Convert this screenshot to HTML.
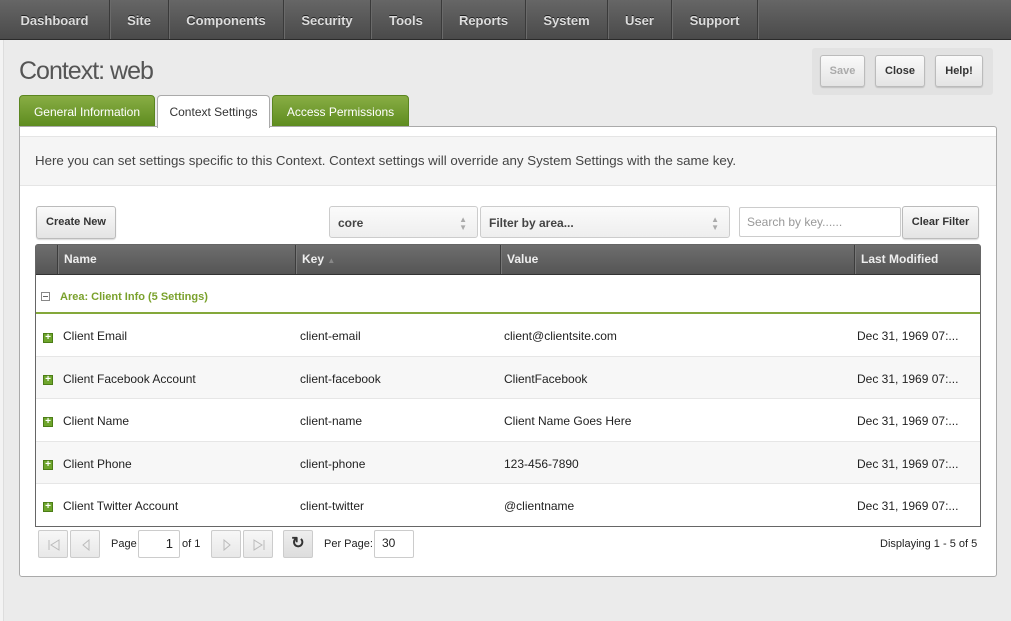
<!DOCTYPE html>
<html><head><style>
*{box-sizing:border-box;margin:0;padding:0}
body{width:1011px;height:621px;overflow:hidden;background:#ebebeb;font-family:"Liberation Sans",sans-serif;position:relative;color:#222}
.a{position:absolute}
#strip{left:0;top:40px;width:4px;height:581px;background:#f3f3f3;border-right:1px solid #ddd}
#nav{left:0;top:0;width:1011px;height:40px;background:linear-gradient(#666,#4a4a4a);border-bottom:1px solid #2a2a2a}
.ni{position:absolute;top:0;height:39px;line-height:41px;text-align:center;color:#ddd;font-weight:bold;font-size:13px;border-right:1px solid #3a3a3a;box-shadow:1px 0 0 #6a6a6a;text-shadow:0 -1px 0 #222}
h1{position:absolute;left:19px;top:57px;font-size:25px;font-weight:normal;color:#555;letter-spacing:-1px}
#btnbox{left:812px;top:48px;width:181px;height:47px;background:#e2e2e2;border-radius:3px}
.btn{position:absolute;background:linear-gradient(#fafafa,#e4e4e4);border:1px solid #bbb;border-radius:3px;font-weight:bold;font-size:11px;color:#333;text-align:center;box-shadow:0 1px 1px rgba(0,0,0,.15)}
.tab{position:absolute;top:95px;height:32px;line-height:32px;font-size:12px;text-align:center;border-radius:4px 4px 0 0}
.tg{background:linear-gradient(#88ad44,#5e8c1f);color:#fff;border:1px solid #5b8620}
#panel{left:19px;top:126px;width:978px;height:451px;background:#fff;border:1px solid #aaa;border-radius:0 3px 3px 3px}
#intro{left:0;top:9px;width:976px;height:50px;background:#f5f5f5;border-top:1px solid #e5e5e5;border-bottom:1px solid #e5e5e5;font-size:13.3px;color:#444;line-height:48px;padding-left:15px}
.sel{position:absolute;top:206px;height:32px;border:1px solid #ccc;border-radius:3px;background:linear-gradient(#fbfbfb,#eee);font-size:12px;font-weight:bold;color:#444;line-height:32px;padding-left:8px}
.sel span{position:absolute;right:10px;font-size:8px;color:#aaa;line-height:8px;top:9px}
#grid{left:35px;top:244px;width:946px;height:283px;border:1px solid #666;background:#fff;border-radius:3px 3px 0 0}
#gh{left:0;top:0;width:944px;height:30px;background:linear-gradient(#6e6e6e,#555);border-bottom:1px solid #333}
.hc{position:absolute;top:0;height:29px;line-height:29px;color:#eee;font-size:12px;font-weight:bold;padding-left:6px;border-left:1px solid #3c3c3c;box-shadow:inset 1px 0 0 #777}
.row{position:absolute;left:0;width:944px;font-size:12px;color:#222}
.row div{position:absolute;top:0}
.plus{width:10px;height:10px;background:#6ea52c;border:1px solid #4b7d16;color:#fff;font-size:10px;line-height:8px;text-align:center;font-weight:bold}
.pb{position:absolute;top:530px;width:30px;height:28px;border:1px solid #ccc;border-radius:2px;background:linear-gradient(#f7f7f7,#e8e8e8);color:#bbb;font-size:12px;text-align:center;line-height:26px}
.pb svg{position:absolute;left:8px;top:7px}
.inp{position:absolute;border:1px solid #ccc;border-radius:2px;background:#fff;font-size:12px}
</style></head><body>
<div class="a" id="strip"></div>
<div class="a" id="nav">
<div class="ni" style="left:0;width:110px">Dashboard</div>
<div class="ni" style="left:110px;width:59px">Site</div>
<div class="ni" style="left:169px;width:115px">Components</div>
<div class="ni" style="left:284px;width:87px">Security</div>
<div class="ni" style="left:371px;width:71px">Tools</div>
<div class="ni" style="left:442px;width:84px">Reports</div>
<div class="ni" style="left:526px;width:82px">System</div>
<div class="ni" style="left:608px;width:64px">User</div>
<div class="ni" style="left:672px;width:86px">Support</div>
</div>
<h1>Context: web</h1>
<div class="a" id="btnbox"></div>
<div class="btn" style="left:820px;top:55px;width:45px;height:32px;line-height:30px;color:#aaa">Save</div>
<div class="btn" style="left:875px;top:55px;width:50px;height:32px;line-height:30px">Close</div>
<div class="btn" style="left:935px;top:55px;width:48px;height:32px;line-height:30px">Help!</div>
<div class="tab tg" style="left:19px;width:136px">General Information</div>
<div class="tab" style="left:157px;width:113px;background:#fff;border:1px solid #aaa;border-bottom:none;height:33px;color:#333;z-index:2">Context Settings</div>
<div class="tab tg" style="left:272px;width:137px">Access Permissions</div>
<div class="a" id="panel"><div class="a" id="intro">Here you can set settings specific to this Context. Context settings will override any System Settings with the same key.</div></div>
<div class="btn" style="left:36px;top:206px;width:80px;height:33px;line-height:31px">Create New</div>
<div class="sel" style="left:329px;width:149px">core<span>▲<br>▼</span></div>
<div class="sel" style="left:480px;width:250px">Filter by area...<span>▲<br>▼</span></div>
<div class="inp" style="left:739px;top:207px;width:162px;height:30px;line-height:28px;padding-left:7px;color:#999">Search by key......</div>
<div class="btn" style="left:902px;top:206px;width:77px;height:33px;line-height:31px">Clear Filter</div>
<div class="a" id="grid">
<div class="a" id="gh">
<div class="hc" style="left:21px;width:238px">Name</div>
<div class="hc" style="left:259px;width:205px">Key <span style="color:#888;font-size:8px">▲</span></div>
<div class="hc" style="left:464px;width:354px">Value</div>
<div class="hc" style="left:818px;width:126px">Last Modified</div>
</div>
<div class="row" style="top:30px;height:39px;border-bottom:2px solid #84a83a">
<div style="left:5px;top:17px;width:9px;height:9px;border:1px solid #888;background:#fff"><div style="left:1px;top:3px;width:5px;height:1px;background:#666"></div></div>
<div style="left:24px;top:16px;color:#7aa12c;font-weight:bold;font-size:11px">Area: Client Info (5 Settings)</div>
</div>
<div class="row" style="top:69px;height:43px;border-bottom:1px solid #e6e6e6"><div class="plus" style="left:7px;top:19px">+</div><div style="left:27px;top:15px">Client Email</div><div style="left:264px;top:15px">client-email</div><div style="left:468px;top:15px">client@clientsite.com</div><div style="left:821px;top:15px">Dec 31, 1969 07:...</div></div>
<div class="row" style="top:112px;height:42px;background:#f7f7f7;border-bottom:1px solid #e6e6e6"><div class="plus" style="left:7px;top:18px">+</div><div style="left:27px;top:15px">Client Facebook Account</div><div style="left:264px;top:15px">client-facebook</div><div style="left:468px;top:15px">ClientFacebook</div><div style="left:821px;top:15px">Dec 31, 1969 07:...</div></div>
<div class="row" style="top:154px;height:43px;border-bottom:1px solid #e6e6e6"><div class="plus" style="left:7px;top:18px">+</div><div style="left:27px;top:15px">Client Name</div><div style="left:264px;top:15px">client-name</div><div style="left:468px;top:15px">Client Name Goes Here</div><div style="left:821px;top:15px">Dec 31, 1969 07:...</div></div>
<div class="row" style="top:197px;height:42px;background:#f7f7f7;border-bottom:1px solid #e6e6e6"><div class="plus" style="left:7px;top:18px">+</div><div style="left:27px;top:15px">Client Phone</div><div style="left:264px;top:15px">client-phone</div><div style="left:468px;top:15px">123-456-7890</div><div style="left:821px;top:15px">Dec 31, 1969 07:...</div></div>
<div class="row" style="top:239px;height:42px"><div class="plus" style="left:7px;top:18px">+</div><div style="left:27px;top:15px">Client Twitter Account</div><div style="left:264px;top:15px">client-twitter</div><div style="left:468px;top:15px">@clientname</div><div style="left:821px;top:15px">Dec 31, 1969 07:...</div></div>
</div>
<div class="pb" style="left:38px"><svg width="14" height="14"><path d="M2 2v10M12 2L4 7l8 5z" stroke="#bbb" fill="none"/></svg></div>
<div class="pb" style="left:70px"><svg width="14" height="14"><path d="M10 2L4 7l6 5z" stroke="#bbb" fill="none"/></svg></div>
<div class="a" style="left:111px;top:538px;font-size:11px">Page</div>
<div class="inp" style="left:138px;top:530px;width:42px;height:28px;text-align:right;padding-right:6px;line-height:26px;font-size:13px">1</div>
<div class="a" style="left:182px;top:538px;font-size:11px">of 1</div>
<div class="pb" style="left:211px"><svg width="14" height="14"><path d="M4 2l6 5-6 5z" stroke="#bbb" fill="none"/></svg></div>
<div class="pb" style="left:243px"><svg width="14" height="14"><path d="M2 2l8 5-8 5zM12 2v10" stroke="#bbb" fill="none"/></svg></div>
<div class="pb" style="left:283px;color:#333;font-size:16px;font-weight:bold;background:linear-gradient(#eee,#ddd)">↻</div>
<div class="a" style="left:324px;top:538px;font-size:11px">Per Page:</div>
<div class="inp" style="left:374px;top:530px;width:40px;height:28px;padding-left:7px;line-height:24px;font-size:12px">30</div>
<div class="a" style="left:880px;top:538px;font-size:11px">Displaying 1 - 5 of 5</div>
</body></html>
